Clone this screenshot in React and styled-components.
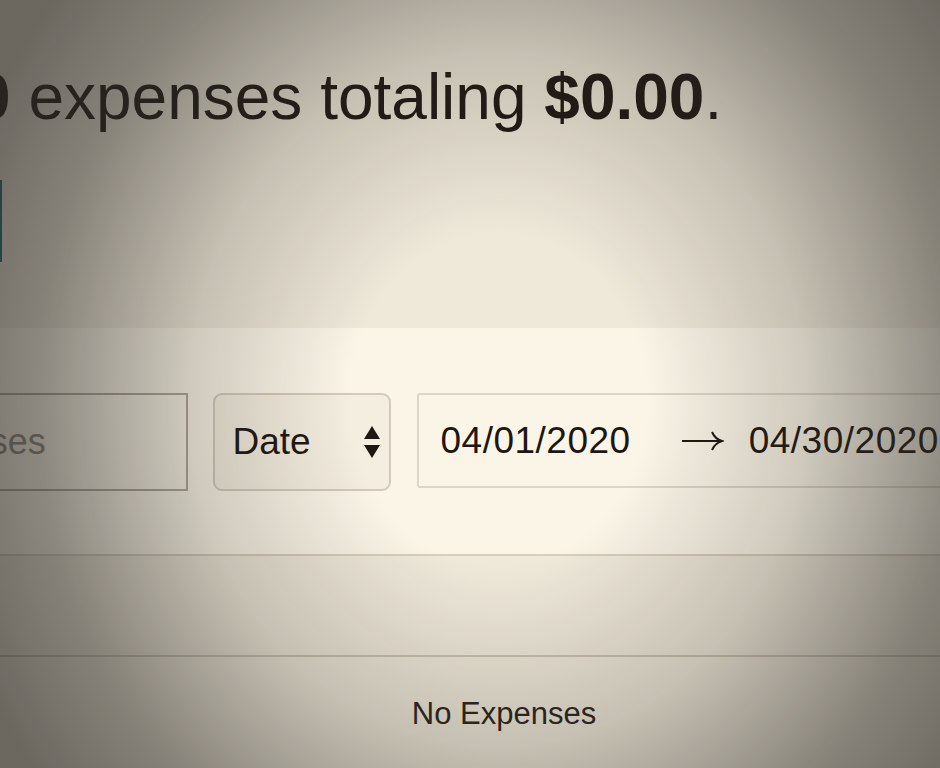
import styled, { createGlobalStyle } from "styled-components";

const GlobalStyle = createGlobalStyle`
  html, body {
    margin: 0;
    height: 100%;
    overflow: hidden;
    background: #efe9da;
    font-family: "Liberation Sans", Arial, sans-serif;
    color: #1e1611;
  }
  body::after {
    content: "";
    position: fixed;
    inset: 0;
    pointer-events: none;
    background: radial-gradient(ellipse 570px 640px at 53% 52%, rgba(60, 52, 42, 0) 26%, rgba(55, 50, 42, 0.22) 54%, rgba(48, 45, 40, 0.55) 81%, rgba(45, 42, 38, 0.68) 100%);
  }
`;

const Page = styled.div`
  width: 1058px;
  margin-left: -25px;
  padding-top: 59px;
`;

const Title = styled.h1`
  margin: 0;
  font-size: 64px;
  font-weight: 400;
  line-height: 77px;
  white-space: nowrap;
  b { font-weight: 700; }
`;

const AddButton = styled.button`
  display: block;
  margin-top: 44px;
  width: 27px;
  height: 82px;
  border: none;
  background: #1e6a70;
`;

const FilterBand = styled.section`
  margin-top: 66px;
  padding: 65px 0 63px;
  background: #faf5e7;
  border-bottom: 2px solid #d6cdbc;
  display: flex;
  justify-content: center;
  align-items: flex-start;
  gap: 25px;
`;

const SearchInput = styled.input`
  flex-shrink: 0;
  box-sizing: border-box;
  width: 442px;
  height: 98px;
  padding: 0 20px;
  border: 2px solid #aea698;
  background: transparent;
  font: 36px "Liberation Sans", Arial, sans-serif;
  color: #1e1611;
  outline: none;
  &::placeholder { color: #8d877c; }
`;

const SelectBox = styled.div`
  flex-shrink: 0;
  box-sizing: border-box;
  width: 178px;
  height: 98px;
  padding: 0 8px 0 18px;
  border: 2px solid #d3cab9;
  border-radius: 9px;
  background: #f4eee0;
  display: flex;
  align-items: center;
  justify-content: space-between;
  font-size: 37px;
`;

const RangeBox = styled.div`
  flex-shrink: 0;
  box-sizing: border-box;
  width: 846px;
  height: 95px;
  margin-left: 1px;
  padding: 0 22px;
  border: 2px solid #ddd5c5;
  border-radius: 3px;
  display: flex;
  align-items: center;
  font-size: 37px;
  white-space: nowrap;
`;

const DateText = styled.span`
  letter-spacing: 0.5px;
`;

const ArrowWrap = styled.span`
  display: flex;
  margin: 0 25px 0 49px;
`;

const HeaderRow = styled.div`
  height: 99px;
  border-bottom: 2px solid #cbc2b1;
`;

const EmptyRow = styled.div`
  padding-top: 39px;
  text-align: center;
  font-size: 31px;
  color: #2a211b;
`;

function Arrows() {
  return (
    <svg width="18" height="36" viewBox="0 0 18 36">
      <polygon points="9,2 17,15 1,15" fill="#1e1611" />
      <polygon points="1,21 17,21 9,34" fill="#1e1611" />
    </svg>
  );
}

function RightArrow() {
  return (
    <svg width="44" height="24" viewBox="0 0 44 24" fill="none" stroke="#1e1611" strokeWidth="2">
      <path d="M2 12 H41" />
      <path d="M32 3 Q35 10 42 12 Q35 14 32 21" />
    </svg>
  );
}

export default function App() {
  return (
    <>
      <GlobalStyle />
      <Page>
        <Title>
          <b>0</b> expenses totaling <b>$0.00</b>.
        </Title>
        <AddButton aria-label="Add expense" />
        <FilterBand>
          <SearchInput placeholder="Search expenses" />
          <SelectBox>
            <span>Date</span>
            <Arrows />
          </SelectBox>
          <RangeBox>
            <DateText>04/01/2020</DateText>
            <ArrowWrap><RightArrow /></ArrowWrap>
            <DateText>04/30/2020</DateText>
          </RangeBox>
        </FilterBand>
        <HeaderRow />
        <EmptyRow>No Expenses</EmptyRow>
      </Page>
    </>
  );
}
